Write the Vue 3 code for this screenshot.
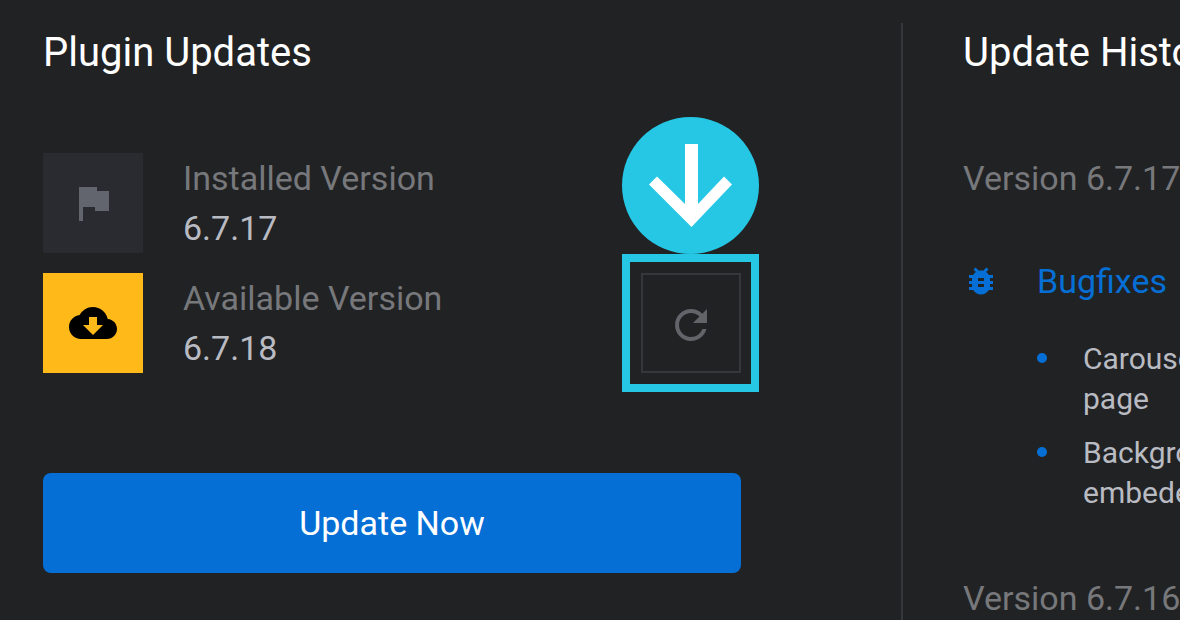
<script setup>
const versions = [
  { label: 'Installed Version', number: '6.7.17', icon: 'flag' },
  { label: 'Available Version', number: '6.7.18', icon: 'cloud' },
]
const fixes = [
  ['Carousel', 'page'],
  ['Background', 'embeded'],
]
</script>

<template>
  <main class="page">
    <section class="updates">
      <h2 class="title">Plugin Updates</h2>
      <div class="versions">
        <div v-for="v in versions" :key="v.label" class="version">
          <div class="tile" :class="v.icon">
            <svg class="icon" viewBox="0 0 24 24" aria-hidden="true">
              <path v-if="v.icon === 'flag'" d="M14 6V4H5v17h2v-7h6v2h7V6z" />
              <path v-else d="M19.35 10.04C18.67 6.59 15.64 4 12 4 9.11 4 6.6 5.64 5.35 8.04 2.34 8.36 0 10.91 0 14c0 3.31 2.69 6 6 6h13c2.76 0 5-2.24 5-5 0-2.64-2.05-4.78-4.65-4.96zM17 13l-5 5-5-5h3V9h4v4h3z" />
            </svg>
          </div>
          <div class="info">
            <div class="label">{{ v.label }}</div>
            <div class="number">{{ v.number }}</div>
          </div>
          <div v-if="v.icon === 'cloud'" class="refresh-wrap">
            <button class="refresh" type="button" aria-label="Check for updates">
              <svg class="icon" viewBox="0 0 24 24" aria-hidden="true">
                <path d="M17.65 6.35C16.2 4.9 14.21 4 12 4c-4.42 0-7.99 3.58-7.99 8s3.57 8 7.99 8c3.73 0 6.84-2.55 7.73-6h-2.08c-.82 2.33-3.04 4-5.65 4-3.31 0-6-2.69-6-6s2.69-6 6-6c1.66 0 3.14.69 4.22 1.78L13 11h7V4l-2.35 2.35z" />
              </svg>
            </button>
            <div class="marker">
              <svg class="pointer" viewBox="0 0 137 137" aria-hidden="true">
                <circle cx="68.5" cy="68.5" r="68.5" fill="#25c7e5" />
                <path fill="#fff" d="M63 27h13v60l26-27.500 8 8L69.500 110 27 67.500l8-8L63 87z" />
              </svg>
              <div class="frame"></div>
            </div>
          </div>
        </div>
      </div>
      <button class="update" type="button">Update Now</button>
    </section>

    <section class="history">
      <h2 class="title">Update History</h2>
      <h3 class="release">Version 6.7.17</h3>
      <h4 class="group">
        <svg class="bug" viewBox="0 0 24 24" aria-hidden="true">
          <path d="M20 8h-2.81c-.45-.78-1.07-1.45-1.82-1.96L17 4.41 15.59 3l-2.17 2.17C12.96 5.06 12.49 5 12 5c-.49 0-.96.06-1.41.17L8.41 3 7 4.41l1.62 1.63C7.88 6.55 7.26 7.22 6.81 8H4v2h2.09c-.05.33-.09.66-.09 1v1H4v2h2v1c0 .34.04.67.09 1H4v2h2.81c1.04 1.79 2.97 3 5.19 3s4.15-1.21 5.19-3H20v-2h-2.09c.05-.33.09-.66.09-1v-1h2v-2h-2v-1c0-.34-.04-.67-.09-1H20V8zm-6 8h-4v-2h4v2zm0-4h-4v-2h4v2z" />
        </svg>
        <span>Bugfixes</span>
      </h4>
      <ul class="fixes">
        <li v-for="fix in fixes" :key="fix[0]" class="fix">
          <span class="dot"></span>
          <span>{{ fix[0] }}<br />{{ fix[1] }}</span>
        </li>
      </ul>
      <h3 class="release">Version 6.7.16</h3>
    </section>
  </main>
</template>

<style>
html,
body {
  background: #212224;
}
</style>

<style scoped>
.page {
  display: grid;
  grid-template-columns: minmax(0, 901fr) minmax(0, 279fr);
  height: 100vh;
  overflow: hidden;
  color: #b9bbc2;
  font-family: Roboto, "Liberation Sans", sans-serif;
}
.title,
.release,
.group {
  margin: 0;
  font-weight: 400;
}
.title {
  color: #fff;
  font-size: 40px;
  line-height: 60px;
}
.updates {
  padding: 23px 160px 0 43px;
}
.versions {
  display: grid;
  gap: 20px;
  margin-top: 70px;
}
.version {
  display: flex;
  gap: 40px;
}
.tile {
  display: grid;
  place-items: center;
  width: 100px;
  height: 100px;
}
.icon {
  width: 48px;
  height: 48px;
  fill: currentColor;
}
.flag {
  background: #2a2b30;
  color: #62656e;
}
.cloud {
  background: #ffb918;
  color: #000;
}
.info {
  flex: 1;
  font-size: 34px;
  line-height: 50px;
}
.label,
.release {
  color: #77787b;
}
.refresh-wrap {
  position: relative;
}
.refresh {
  display: grid;
  place-items: center;
  width: 100px;
  height: 100px;
  padding: 4px 0 0;
  border: 2px solid #36373a;
  background: none;
  color: #626469;
}
.marker {
  position: absolute;
  right: -18px;
  bottom: -19px;
  width: 137px;
  pointer-events: none;
}
.pointer {
  display: block;
  width: 137px;
  height: 137px;
}
.frame {
  box-sizing: border-box;
  height: 138px;
  border: 8px solid #25c7e5;
}
.update {
  display: block;
  width: 100%;
  height: 100px;
  margin-top: 100px;
  padding: 0;
  border: 0;
  border-radius: 8px;
  background: #066fd6;
  color: #fff;
  font: inherit;
  font-size: 34px;
}
.history {
  margin-top: 23px;
  padding-left: 60px;
  border-left: 2px solid #36373a;
  white-space: nowrap;
  overflow: hidden;
}
.release {
  margin-top: 70px;
  font-size: 34px;
  line-height: 50px;
}
.group {
  display: flex;
  align-items: center;
  gap: 38px;
  margin-top: 53px;
  color: #066fd6;
  font-size: 34px;
  line-height: 50px;
}
.bug {
  width: 36px;
  height: 36px;
  fill: currentColor;
}
.fixes {
  display: grid;
  gap: 14px;
  margin: 33px 0 0;
  padding: 0 0 0 74px;
  list-style: none;
}
.fix {
  display: flex;
  gap: 36px;
  font-size: 30px;
  line-height: 40px;
}
.dot {
  flex: none;
  width: 10px;
  height: 10px;
  margin-top: 14px;
  border-radius: 50%;
  background: #066fd6;
}
.fixes + .release {
  margin-top: 60px;
}
</style>
